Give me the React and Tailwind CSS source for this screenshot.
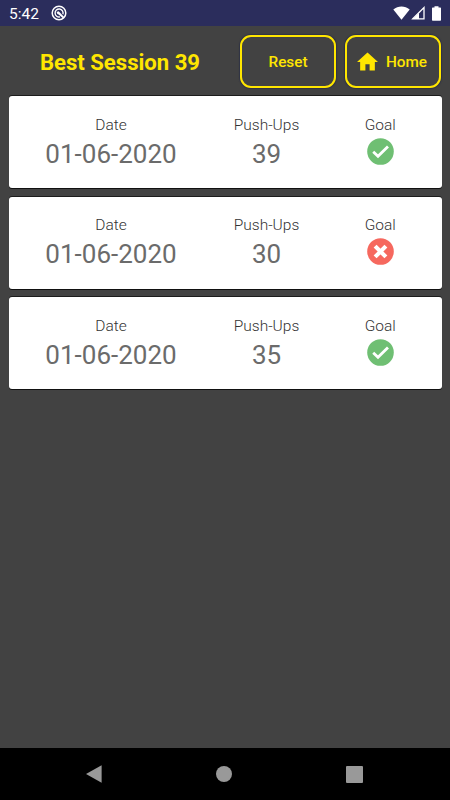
const sessions = [
  { id: 1, date: "01-06-2020", pushUps: 39, goal: true },
  { id: 2, date: "01-06-2020", pushUps: 30, goal: false },
  { id: 3, date: "01-06-2020", pushUps: 35, goal: true },
];

function StatusBar() {
  return (
    <div className="flex h-[26px] shrink-0 items-center bg-[#2b2d5c] pl-[9px] pr-2 text-white">
      <span className="w-[31px] pt-px text-[15.5px] leading-[26px]">5:42</span>
      <svg viewBox="0 0 16 16" className="ml-[10.5px] h-4 w-4" fill="none">
        <circle cx="8" cy="8" r="6.8" stroke="#fff" strokeWidth="1.5" />
        <path d="M11.9 9.2A4 4 0 1 0 9 11.9" stroke="#fff" strokeWidth="1.4" />
        <path d="M5.6 7L7.6 6.2L13.4 12.2L12.2 13.4L7.6 9.6L6.4 9Z" fill="#fff" />
      </svg>
      <div className="flex-1" />
      <svg viewBox="0 0 17 14" className="h-[14px] w-[17px]" fill="#fff">
        <path d="M0.3 3.6C5 -0.5 12 -0.5 16.7 3.6L8.5 13.8Z" />
      </svg>
      <svg viewBox="0 0 14 14" className="ml-px h-[14px] w-[14px]">
        <path d="M1.8 12.8L13 1.6V12.8Z" fill="none" stroke="#fff" strokeWidth="1.3" />
        <path d="M2 13L8 7V13Z" fill="#fff" />
      </svg>
      <svg viewBox="0 0 9 15" className="ml-[7px] mr-px h-[15px] w-[9px]" fill="#fff">
        <path d="M2.5 0.3H6.5V1.6H8.3Q9 1.6 9 2.3V14Q9 14.7 8.3 14.7H0.7Q0 14.7 0 14V2.3Q0 1.6 0.7 1.6H2.5Z" />
      </svg>
    </div>
  );
}

function GoalIcon({ reached }) {
  return (
    <svg viewBox="0 0 26 26" className="mt-[3px] h-[27px] w-[27px]">
      <circle cx="13" cy="13" r="12.8" fill={reached ? "#6fbf73" : "#f6685e"} />
      {reached ? (
        <path d="M6 13.2L10.6 17.6L20.2 8.2" fill="none" stroke="#fff" strokeWidth="2.7" />
      ) : (
        <path d="M7.8 7.8L18.2 18.2M18.2 7.8L7.8 18.2" fill="none" stroke="#fff" strokeWidth="4" />
      )}
    </svg>
  );
}

function SessionCard({ session }) {
  return (
    <div className="flex h-[92px] rounded-[3px] bg-white pt-[18.8px] text-[#6b6b6b] shadow-[0_-1px_0_0_#1c1c1c,0_1px_0_0_#111]">
      <div className="flex w-[205px] flex-col items-center">
        <span className="text-[15.5px] font-light leading-5 text-[#333]">Date</span>
        <span className="text-[26px] leading-[38px]">{session.date}</span>
      </div>
      <div className="flex w-[106px] flex-col items-center">
        <span className="text-[15.5px] font-light leading-5 text-[#333]">Push-Ups</span>
        <span className="text-[26px] leading-[38px]">{session.pushUps}</span>
      </div>
      <div className="flex w-[121.6px] flex-col items-center">
        <span className="text-[15.5px] font-light leading-5 text-[#333]">Goal</span>
        <GoalIcon reached={session.goal} />
      </div>
    </div>
  );
}

export default function App() {
  return (
    <div className="flex h-[800px] w-[450px] flex-col overflow-hidden bg-[#424242] font-[Roboto,sans-serif]">
      <StatusBar />

      <div className="flex h-[70.2px] shrink-0 gap-[9px] pt-[9px] pr-[9px] text-[#ffe600]">
        <h1 className="flex h-[53px] w-[231px] items-center justify-center pt-[2px] pl-[9px] text-[22.1px] font-bold">
          Best Session 39
        </h1>
        <button className="h-[53px] w-24 rounded-[11px] border-2 border-[#ffe600] pt-px text-[15.3px] font-medium shadow-[0_0_1px_1px_#303345]">
          Reset
        </button>
        <button className="flex h-[53px] w-24 items-center justify-center rounded-[11px] border-2 border-[#ffe600] pr-[2px] text-[15.3px] font-medium shadow-[0_0_1px_1px_#303345]">
          <svg viewBox="2 3 20 17" className="mr-2 mb-px h-[19px] w-[21px] shrink-0" fill="currentColor">
            <path d="M10 20v-6h4v6h5v-8h3L12 3 2 12h3v8z" />
          </svg>
          <span className="pt-px">Home</span>
        </button>
      </div>

      <div className="flex flex-1 flex-col gap-[8.4px] px-[8.5px]">
        {sessions.map((session) => (
          <SessionCard key={session.id} session={session} />
        ))}
      </div>

      <div className="flex h-[52px] shrink-0 items-center justify-between bg-black pl-[86px] pr-[87px]">
        <svg viewBox="0 0 16 18" className="h-[18px] w-4" fill="#999">
          <path d="M0 9L15.6 0.2V17.8Z" />
        </svg>
        <div className="h-4 w-4 rounded-full bg-[#999]" />
        <div className="h-[17px] w-[17px] rounded-[1px] bg-[#999]" />
      </div>
    </div>
  );
}
